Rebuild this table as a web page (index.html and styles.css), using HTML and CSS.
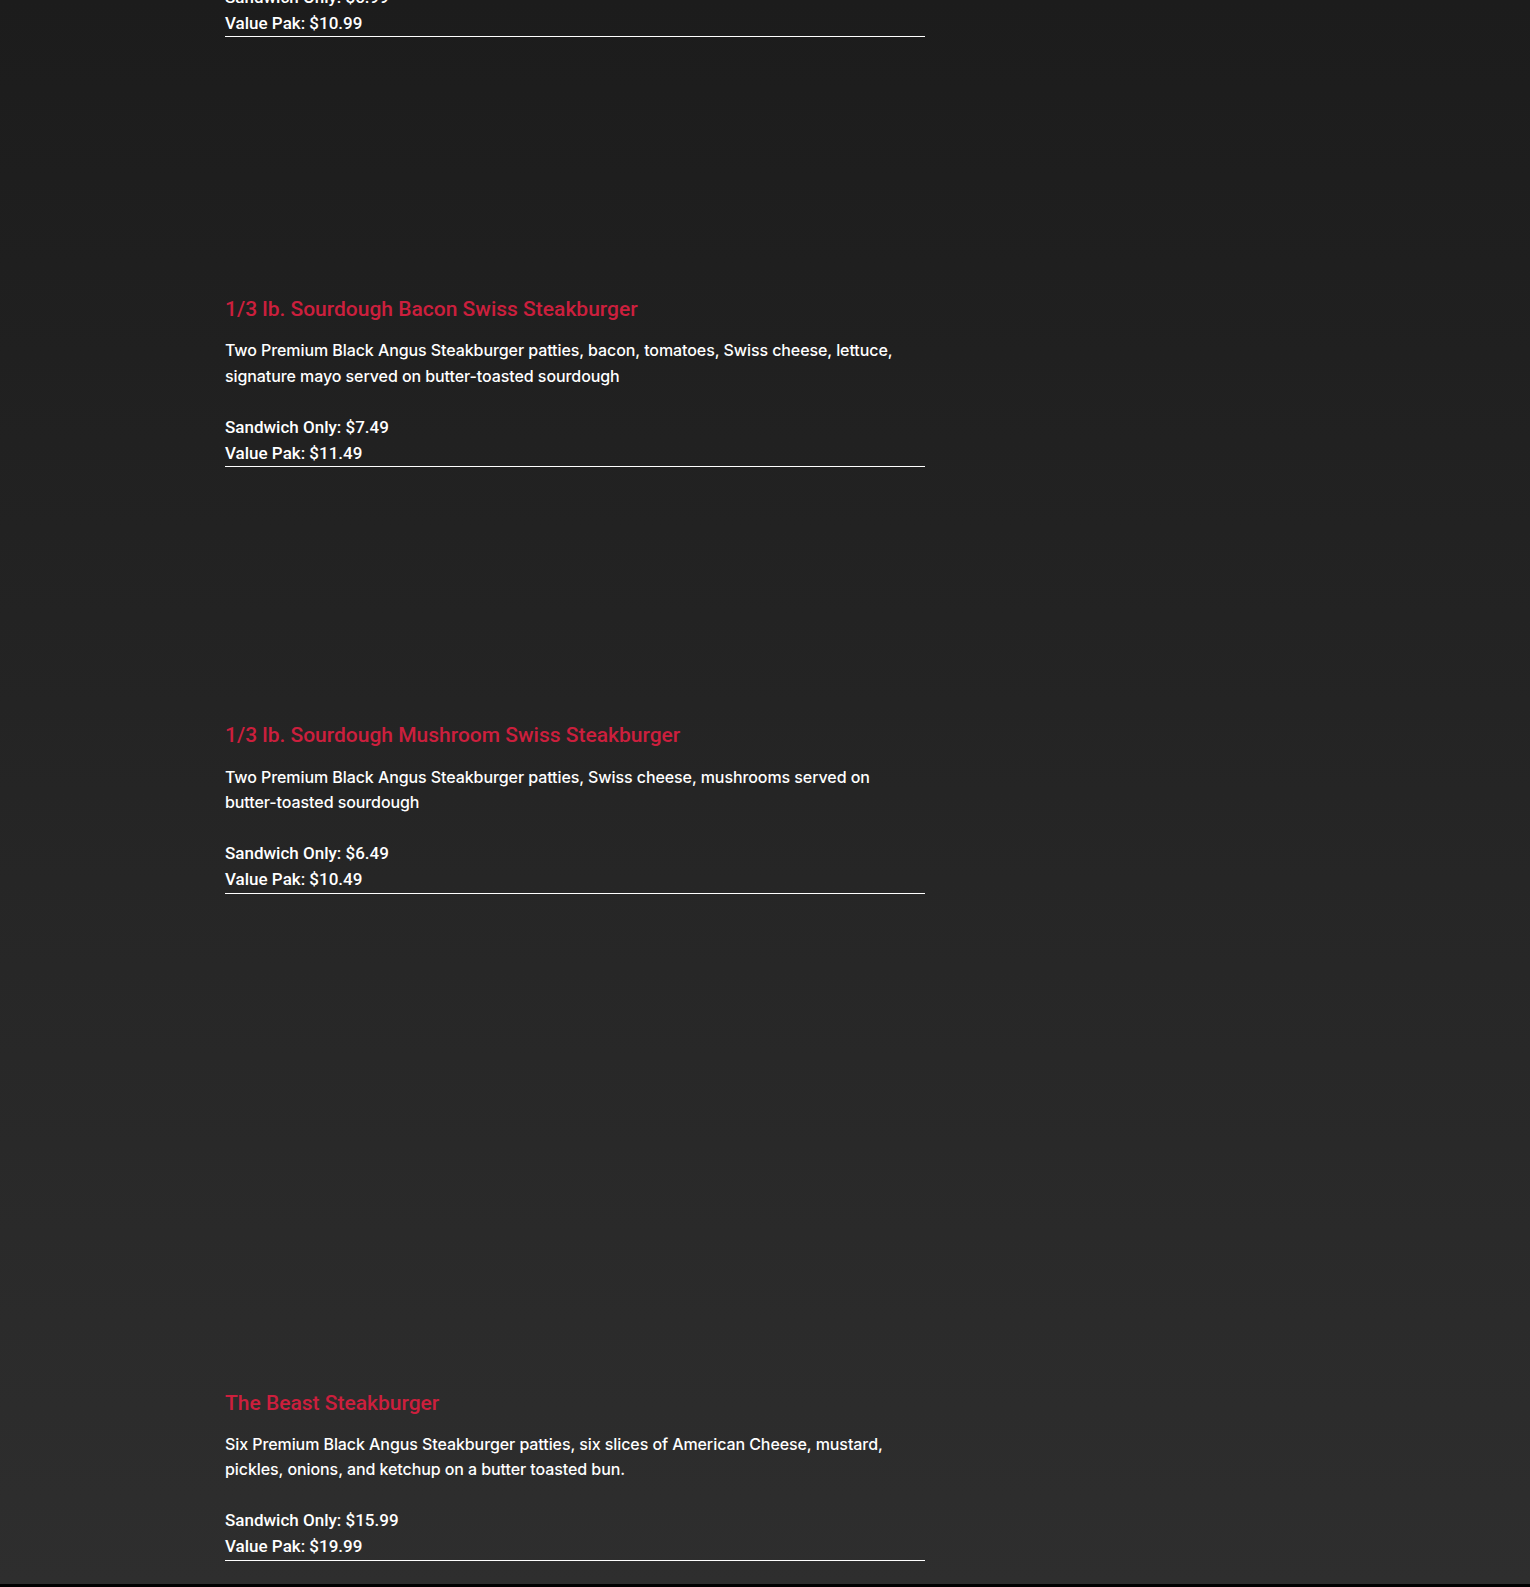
FILE: index.html
```html
<!DOCTYPE html>
<html lang="en">
<head>
    <meta charset="UTF-8">
    <meta name="viewport" content="width=device-width, initial-scale=1.0">
    <title>Steakburgers</title>
    <link rel="stylesheet" href="styles.css">
</head>
<body>
    <section class="menu">
        <div class="menu-list">
            <div class="menu-item first">
                <p class="prices">
                    Sandwich Only: $6.99<br>
                    Value Pak: $10.99
                </p>
            </div>

            <div class="menu-item">
                <div class="photo photo-sm"></div>
                <h3>1/3 lb. Sourdough Bacon Swiss Steakburger</h3>
                <p class="desc">Two Premium Black Angus Steakburger patties, bacon, tomatoes, Swiss cheese, lettuce, signature mayo served on butter-toasted sourdough</p>
                <p class="prices">
                    Sandwich Only: $7.49<br>
                    Value Pak: $11.49
                </p>
            </div>

            <div class="menu-item">
                <div class="photo photo-xs"></div>
                <h3>1/3 lb. Sourdough Mushroom Swiss Steakburger</h3>
                <p class="desc">Two Premium Black Angus Steakburger patties, Swiss cheese, mushrooms served on butter-toasted sourdough</p>
                <p class="prices">
                    Sandwich Only: $6.49<br>
                    Value Pak: $10.49
                </p>
            </div>

            <div class="menu-item">
                <div class="photo photo-lg"></div>
                <h3>The Beast Steakburger</h3>
                <p class="desc">Six Premium Black Angus Steakburger patties, six slices of American Cheese, mustard, pickles, onions, and ketchup on a butter toasted bun.</p>
                <p class="prices">
                    Sandwich Only: $15.99<br>
                    Value Pak: $19.99
                </p>
            </div>
        </div>
    </section>

    <footer></footer>
</body>
</html>
```

FILE: styles.css
```css
body {
    margin: 0;
    font-family: Roboto, "Liberation Sans", sans-serif;
    color: #fff;
    background: #000;
}

.menu {
    background: linear-gradient(to bottom, #1c1c1c, #2e2e2e);
    padding-bottom: 23px;
    overflow: hidden;
}

.menu-list {
    width: 700px;
    margin-left: 225px;
    margin-top: -15px;
}

.photo-xs {
    height: 256px;
}

.photo-sm {
    height: 260px;
}

.photo-lg {
    height: 497px;
}

h3 {
    margin: 0 0 16px;
    font-size: 21px;
    line-height: 1.2;
    font-weight: 500;
    color: #cc1f3d;
}

.desc,
.prices {
    margin: 0;
    line-height: 25.6px;
    font-weight: 500;
}

.desc {
    font-family: Inter, Roboto, sans-serif;
    font-size: 16px;
    letter-spacing: -0.08px;
    margin-bottom: 25.6px;
}

.prices {
    font-size: 17px;
    border-bottom: 1px solid #fff;
}

footer {
    height: 40px;
    background: #000;
}
```
